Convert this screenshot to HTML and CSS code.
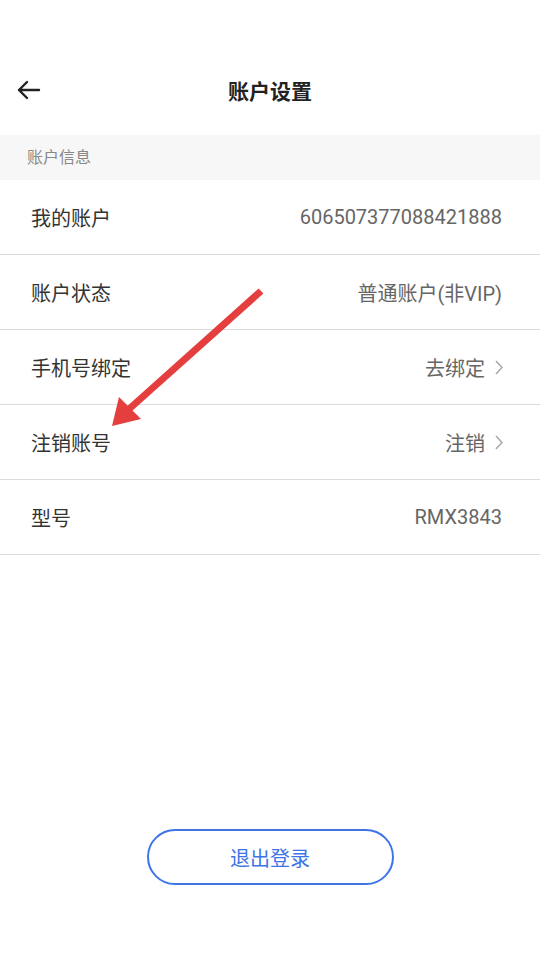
FILE: index.html
```html
<!DOCTYPE html>
<html lang="zh-CN">
<head>
  <meta charset="UTF-8" />
  <meta name="viewport" content="width=device-width, initial-scale=1.0"/>
  <title>账户设置</title>
  <link rel="stylesheet" href="styles.css">
</head>
<body>
  <div id="page">
    <div id="header">
      <div class="back">
        <svg width="26" height="22" viewBox="0 0 26 22">
          <path d="M23 11H3M11 3L3 11l8 8" fill="none" stroke="#222" stroke-width="2.4" stroke-linecap="round" stroke-linejoin="round"/>
        </svg>
      </div>
      <div class="title">账户设置</div>
    </div>

    <div class="section">账户信息</div>

    <div class="list">
      <div class="row">
        <span class="label">我的账户</span>
        <span class="value">606507377088421888</span>
      </div>
      <div class="row">
        <span class="label">账户状态</span>
        <span class="value">普通账户(非VIP)</span>
      </div>
      <div class="row">
        <span class="label">手机号绑定</span>
        <span class="value">去绑定<svg class="chev" width="8" height="15" viewBox="0 0 8 15"><path d="M1 1l6 6.5L1 14" fill="none" stroke="#aaa" stroke-width="1.6"/></svg></span>
      </div>
      <div class="row">
        <span class="label">注销账号</span>
        <span class="value">注销<svg class="chev" width="8" height="15" viewBox="0 0 8 15"><path d="M1 1l6 6.5L1 14" fill="none" stroke="#aaa" stroke-width="1.6"/></svg></span>
      </div>
      <div class="row">
        <span class="label">型号</span>
        <span class="value">RMX3843</span>
      </div>
    </div>

    <div class="footer">
      <button id="logoutBtn">退出登录</button>
    </div>

    <!-- 标注箭头 -->
    <svg id="mark" width="540" height="960" viewBox="0 0 540 960">
      <line x1="261" y1="291" x2="128" y2="410" stroke="#e53e3e" stroke-width="7"/>
      <polygon points="112,426 119,397 141,419" fill="#e53e3e"/>
    </svg>
  </div>
</body>
</html>
```

FILE: styles.css
```css
body {
  margin: 0;
  background: #fff;
  font-family: Roboto, "Noto Sans CJK SC", sans-serif;
}

#page {
  position: relative;
  width: 540px;
  height: 960px;
  overflow: hidden;
}

#header {
  position: relative;
  height: 135px;
  padding-top: 45px;
  box-sizing: border-box;
  display: flex;
  align-items: center;
  justify-content: center;
}

.back {
  position: absolute;
  left: 16px;
  top: 79px;
  height: 22px;
}

.title {
  font-size: 21px;
  font-weight: bold;
  color: #222;
}

.section {
  height: 45px;
  line-height: 45px;
  padding-left: 27px;
  background: #f7f7f7;
  color: #888;
  font-size: 16px;
}

.row {
  height: 74px;
  display: flex;
  align-items: center;
  justify-content: space-between;
  padding: 0 38px 0 31px;
  border-bottom: 1px solid #dcdcdc;
}

.label {
  font-size: 20px;
  color: #333;
}

.value {
  font-size: 20px;
  color: #666;
  display: flex;
  align-items: center;
}

.chev {
  margin-left: 10px;
  margin-right: -1px;
}

.footer {
  display: flex;
  justify-content: center;
  margin-top: 274px;
}

#logoutBtn {
  width: 247px;
  height: 56px;
  border: 2px solid #3d74e8;
  border-radius: 28px;
  background: #fff;
  color: #3d74e8;
  font-size: 20px;
  font-family: inherit;
}

#mark {
  position: absolute;
  left: 0;
  top: 0;
  pointer-events: none;
}
```
